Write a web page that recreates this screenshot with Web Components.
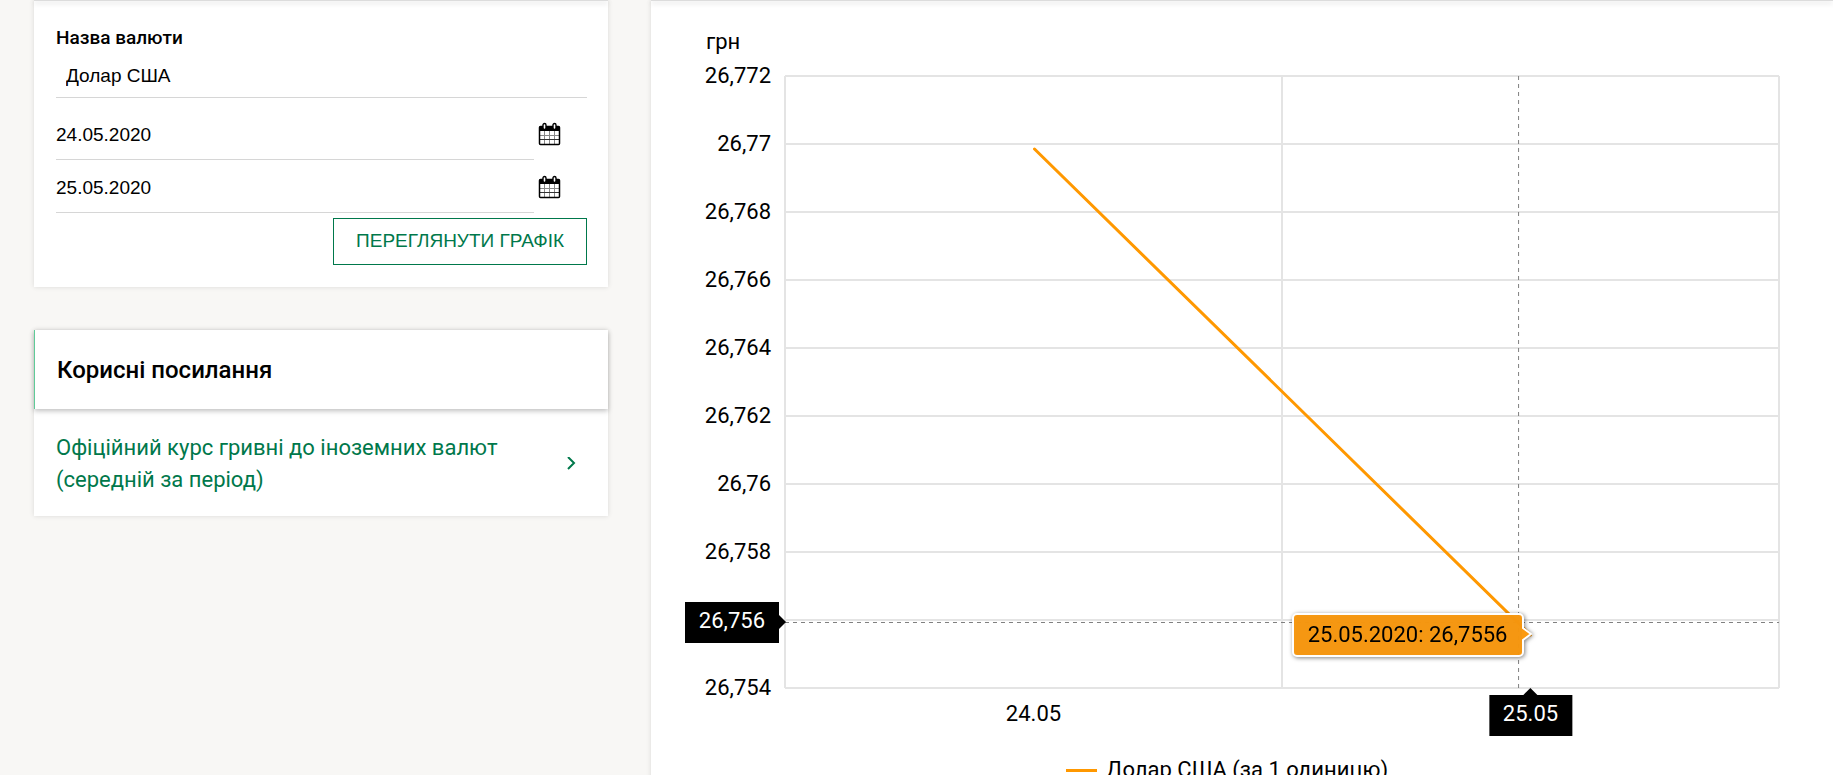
<!DOCTYPE html>
<html lang="uk">
<head>
<meta charset="utf-8">
<meta name="viewport" content="width=device-width, initial-scale=1">
<title>Графік курсу валют</title>
<style>
body { margin: 0; background: #f8f7f5; font-family: Roboto, "Liberation Sans", sans-serif; color: #000; }
</style>
</head>
<body>
<rate-page>
  <panel-card slot="side">
    <currency-form></currency-form>
  </panel-card>
  <panel-card slot="side" heading="Корисні посилання">
    <useful-link href="#average">Офіційний курс гривні до іноземних валют (середній за період)</useful-link>
  </panel-card>
  <panel-card slot="main">
    <rate-chart></rate-chart>
  </panel-card>
</rate-page>

<script>
function define(name, html, setup) {
  const template = document.createElement('template');
  template.innerHTML = html;
  customElements.define(name, class extends HTMLElement {
    constructor() {
      super();
      this.attachShadow({ mode: 'open' }).append(template.content.cloneNode(true));
    }
    connectedCallback() {
      if (setup) setup(this, this.shadowRoot);
    }
  });
}

define('rate-page', `
<style>
  :host { display: grid; grid-template-columns: minmax(320px, 574fr) minmax(600px, 1182fr); column-gap: 43px; padding-left: 34px; }
  .side { display: flex; flex-direction: column; gap: 43px; }
  .main { display: grid; }
</style>
<aside class="side"><slot name="side"></slot></aside>
<main class="main"><slot name="main"></slot></main>`);

define('panel-card', `
<style>
  :host { display: block; background: #fff; box-shadow: 0 0 5px rgba(0, 0, 0, .12); }
  header { position: relative; box-shadow: 0 2px 5px rgba(0, 0, 0, .25); }
  header:empty { height: 1px; margin-bottom: -1px; background: #dcdcdc; }
  h2 { margin: 0; border-left: 1px solid #5fcb98; padding: 24px 22px 23px; font-size: 24px; line-height: 32px; font-weight: 500; }
</style>
<header></header>
<slot></slot>`, (host, root) => {
  if (host.hasAttribute('heading')) {
    const title = document.createElement('h2');
    title.textContent = host.getAttribute('heading');
    root.querySelector('header').replaceChildren(title);
  }
});

define('date-field', `
<style>
  :host { display: grid; grid-template-columns: 1fr 53px; align-items: center; height: 53px; }
  input { box-sizing: border-box; width: 100%; height: 53px; margin: 0; padding: 3px 0 0; border: 0; border-bottom: 1px solid #d6d6d6; background: none; color: inherit; font: 19px/24px "Liberation Sans", Arial, sans-serif; outline: 0; }
  button { display: block; margin: 0 0 0 4px; padding: 0; border: 0; background: none; color: #000; width: 24px; height: 24px; }
  svg { display: block; }
</style>
<input type="text">
<button type="button" aria-label="Відкрити календар">
  <svg width="24" height="24" viewBox="0 0 24 24" fill="none" stroke="#000">
    <path d="M6.500 9v13M11.500 9v13M16.500 9v13M2 13.500h19" stroke="#888"/>
    <path d="M2 17.500h19" stroke="#333"/>
    <rect x="1.500" y="4.500" width="20" height="18" rx="1" stroke-width="1.500"/>
    <path d="M1.500 4.500h20V9h-20z" fill="#000" stroke="none"/>
    <rect x="5" y="1.500" width="3" height="6" rx="1.500" fill="#fff" stroke-width="1.400"/>
    <rect x="15" y="1.500" width="3" height="6" rx="1.500" fill="#fff" stroke-width="1.400"/>
  </svg>
</button>`, (host, root) => {
  const input = root.querySelector('input');
  input.value = host.getAttribute('value');
  input.setAttribute('aria-label', host.getAttribute('label'));
});

define('currency-form', `
<style>
  :host { display: block; padding: 26px 21px 22px 22px; }
  form { display: flex; flex-direction: column; }
  label { font-size: 19px; line-height: 24px; font-weight: 500; }
  select { appearance: none; height: 48px; margin: 0 0 9px; padding: 4px 10px 0; border: 0; border-bottom: 1px solid #d6d6d6; border-radius: 0; background: none; color: #000; font: 19px/24px "Liberation Sans", Arial, sans-serif; }
  button { align-self: flex-end; margin-top: 5px; height: 47px; padding: 0 22px 1px; border: 1px solid #00784b; background: #fff; color: #00784b; font: 19px/24px "Liberation Sans", Arial, sans-serif; text-transform: uppercase; }
</style>
<form>
  <label for="currency">Назва валюти</label>
  <select id="currency"><option>Долар США</option></select>
  <date-field label="Дата від" value="24.05.2020"></date-field>
  <date-field label="Дата до" value="25.05.2020"></date-field>
  <button type="button">Переглянути графік</button>
</form>`);

define('useful-link', `
<style>
  :host { display: block; }
  a { display: flex; align-items: center; justify-content: space-between; gap: 24px; padding: 23px 32px 20px 22px; color: #00784b; text-decoration: none; font-size: 22px; line-height: 32px; }
  svg { flex: none; }
</style>
<a><span><slot></slot></span>
  <svg width="10" height="14" viewBox="0 0 10 14" fill="none" stroke="currentColor" stroke-width="2"><path d="M2 0l6 6-6 6"/></svg>
</a>`, (host, root) => { root.querySelector('a').href = host.getAttribute('href'); });

define('axis-balloon', `
<style>
  :host { display: block; position: absolute; background: #000; color: #fff; font-size: 22px; line-height: 24px; padding: 7px 14px 10px; white-space: nowrap; }
  :host::after { content: ""; position: absolute; border: 7px solid transparent; }
  :host([side="left"]) { top: 526px; right: calc(100% + 6px); }
  :host([side="left"])::after { left: 100%; top: 13px; border-left-color: #000; border-right: 0; }
  :host([side="bottom"]) { top: calc(100% + 7px); left: 75%; transform: translateX(-50%); }
  :host([side="bottom"])::after { bottom: 100%; left: calc(50% - 7px); border-bottom-color: #000; border-top: 0; }
</style>
<slot></slot>`);

define('point-tooltip', `
<style>
  :host { display: block; position: absolute; right: 25%; top: 537px; margin-right: 7px; filter: drop-shadow(1px 1px 2px rgba(0, 0, 0, .5)); }
  .box { border: 2px solid #fff; border-radius: 5px; background: rgba(249, 152, 14, .97); font-size: 22px; line-height: 24px; padding: 8px 14px; white-space: nowrap; }
  svg { position: absolute; left: calc(100% - 2px); top: 13px; }
</style>
<div class="box"><slot></slot></div>
<svg width="12" height="16" viewBox="0 0 12 16"><path d="M0 0L2 2L9 8L2 14L0 16z" fill="#fb9a10"/><path d="M1 0v2L9 8L1 14v2" fill="none" stroke="#fff" stroke-width="2"/></svg>`);

define('rate-chart', `
<style>
  :host { display: block; padding: 30px 54px 20px 24px; font-size: 22px; line-height: 24px; }
  figure { margin: 0; display: grid; grid-template-columns: 96px 1fr; column-gap: 14px; }
  .unit { padding: 0 0 10px 31px; grid-column: 1 / -1; }
  .scale { display: flex; flex-direction: column; justify-content: space-between; height: 636px; text-align: right; }
  .plot { position: relative; height: 612px; margin-top: 12px; }
  svg { display: block; width: 100%; height: 100%; overflow: visible; fill: none; }
  svg * { vector-effect: non-scaling-stroke; }
  .grid { stroke: #e4e4e4; stroke-width: 2; }
  .cross { stroke: #808080; stroke-width: 1; stroke-dasharray: 4 4; }
  .rate { stroke: #ff9800; stroke-width: 3; stroke-linecap: round; }
  .dates { grid-column: 2; display: grid; grid-template-columns: 1fr 1fr; text-align: center; padding-top: 2px; }
  figcaption { grid-column: 1 / -1; display: flex; justify-content: center; align-items: center; gap: 9px; padding-top: 32px; }
  figcaption::before { content: ""; width: 31px; height: 3px; background: #ff9800; }
</style>
<figure>
  <div class="unit">грн</div>
  <div class="scale"></div>
  <div class="plot">
    <svg viewBox="0 0 1000 612" preserveAspectRatio="none" aria-hidden="true">
      <g class="lines"></g>
      <path class="grid" d="M0 0V612M500 0V612M1000 0V612"/>
      <path class="cross" d="M738 0V612M0 546.500H1000"/>
      <path class="rate" d="M251 73L750 559"/>
    </svg>
    <axis-balloon side="left">26,756</axis-balloon>
    <axis-balloon side="bottom">25.05</axis-balloon>
    <point-tooltip>25.05.2020: 26,7556</point-tooltip>
  </div>
  <div class="dates"><span>24.05</span></div>
  <figcaption>Долар США (за 1 одиницю)</figcaption>
</figure>`, (host, root) => {
  const ticks = ['26,772', '26,77', '26,768', '26,766', '26,764', '26,762', '26,76', '26,758', '', '26,754'];
  root.querySelector('.scale').replaceChildren(...ticks.map(text => {
    const label = document.createElement('span');
    label.textContent = text;
    label.style.height = '24px';
    return label;
  }));
  root.querySelector('.lines').innerHTML =
    ticks.map((_, i) => '<path class="grid" d="M0 ' + i * 68 + 'H1000"/>').join('');
});
</script>
</body>
</html>
